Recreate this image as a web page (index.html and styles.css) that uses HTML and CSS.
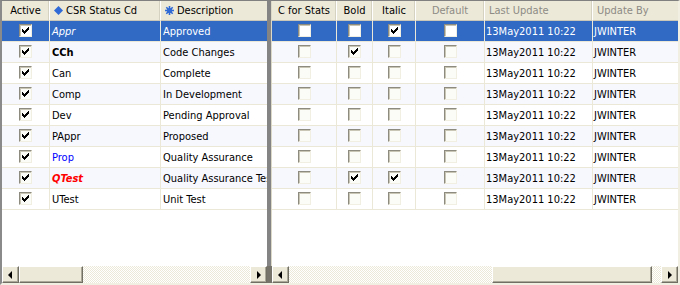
FILE: index.html
```html
<!DOCTYPE html>
<html lang="en">
<head>
    <meta charset="UTF-8">
    <title>CSR Status</title>
    <link rel="stylesheet" href="styles.css">
</head>
<body>

    <div class="grid-frame">

        <!-- fixed columns -->
        <div class="pane pane-left">
            <div class="table">
                <div class="row head">
                    <div class="hcell center">Active</div>
                    <div class="hcell">
                        <svg class="hicon" width="9" height="9" viewBox="0 0 9 9"><polygon points="4.5,0 9,4.5 4.5,9 0,4.5" fill="#2f6ad6"/></svg>
                        CSR Status Cd
                    </div>
                    <div class="hcell">
                        <svg class="hicon" width="9" height="9" viewBox="0 0 9 9">
                            <g stroke="#2f6ad6" stroke-width="1.6">
                                <line x1="4.5" y1="0" x2="4.5" y2="9"/>
                                <line x1="0" y1="4.5" x2="9" y2="4.5"/>
                                <line x1="1.3" y1="1.3" x2="7.7" y2="7.7"/>
                                <line x1="7.7" y1="1.3" x2="1.3" y2="7.7"/>
                            </g>
                            <circle cx="4.5" cy="4.5" r="2.6" fill="#2f6ad6"/>
                        </svg>
                        Description
                    </div>
                </div>

                <div class="row selected">
                    <div class="cell center"><span class="cb on"></span></div>
                    <div class="cell italic">Appr</div>
                    <div class="cell">Approved</div>
                </div>
                <div class="row alt">
                    <div class="cell center"><span class="cb on"></span></div>
                    <div class="cell bold">CCh</div>
                    <div class="cell">Code Changes</div>
                </div>
                <div class="row">
                    <div class="cell center"><span class="cb on"></span></div>
                    <div class="cell">Can</div>
                    <div class="cell">Complete</div>
                </div>
                <div class="row alt">
                    <div class="cell center"><span class="cb on"></span></div>
                    <div class="cell">Comp</div>
                    <div class="cell">In Development</div>
                </div>
                <div class="row">
                    <div class="cell center"><span class="cb on"></span></div>
                    <div class="cell">Dev</div>
                    <div class="cell">Pending Approval</div>
                </div>
                <div class="row alt">
                    <div class="cell center"><span class="cb on"></span></div>
                    <div class="cell">PAppr</div>
                    <div class="cell">Proposed</div>
                </div>
                <div class="row">
                    <div class="cell center"><span class="cb on"></span></div>
                    <div class="cell blue">Prop</div>
                    <div class="cell">Quality Assurance</div>
                </div>
                <div class="row alt">
                    <div class="cell center"><span class="cb on"></span></div>
                    <div class="cell bold italic red">QTest</div>
                    <div class="cell">Quality Assurance Test</div>
                </div>
                <div class="row">
                    <div class="cell center"><span class="cb on"></span></div>
                    <div class="cell">UTest</div>
                    <div class="cell">Unit Test</div>
                </div>
            </div>

            <div class="hscroll">
                <div class="sbtn"><span class="arrow-left"></span></div>
                <div class="track"><div class="thumb thumb-left"></div></div>
                <div class="sbtn"><span class="arrow-right"></span></div>
            </div>
        </div>

        <div class="splitter">
            <div class="split-top"></div>
            <div class="split-bottom"></div>
        </div>

        <!-- scrolling columns -->
        <div class="pane pane-right">
            <div class="table">
                <div class="row head">
                    <div class="hcell center">C for Stats</div>
                    <div class="hcell center">Bold</div>
                    <div class="hcell center">Italic</div>
                    <div class="hcell center muted">Default</div>
                    <div class="hcell muted">Last Update</div>
                    <div class="hcell muted">Update By</div>
                </div>

                <div class="row selected">
                    <div class="cell center"><span class="cb"></span></div>
                    <div class="cell center"><span class="cb"></span></div>
                    <div class="cell center"><span class="cb on"></span></div>
                    <div class="cell center"><span class="cb"></span></div>
                    <div class="cell tight">13May2011 10:22</div>
                    <div class="cell tight">JWINTER</div>
                </div>
                <div class="row alt">
                    <div class="cell center"><span class="cb"></span></div>
                    <div class="cell center"><span class="cb on"></span></div>
                    <div class="cell center"><span class="cb"></span></div>
                    <div class="cell center"><span class="cb"></span></div>
                    <div class="cell tight">13May2011 10:22</div>
                    <div class="cell tight">JWINTER</div>
                </div>
                <div class="row">
                    <div class="cell center"><span class="cb"></span></div>
                    <div class="cell center"><span class="cb"></span></div>
                    <div class="cell center"><span class="cb"></span></div>
                    <div class="cell center"><span class="cb"></span></div>
                    <div class="cell tight">13May2011 10:22</div>
                    <div class="cell tight">JWINTER</div>
                </div>
                <div class="row alt">
                    <div class="cell center"><span class="cb"></span></div>
                    <div class="cell center"><span class="cb"></span></div>
                    <div class="cell center"><span class="cb"></span></div>
                    <div class="cell center"><span class="cb"></span></div>
                    <div class="cell tight">13May2011 10:22</div>
                    <div class="cell tight">JWINTER</div>
                </div>
                <div class="row">
                    <div class="cell center"><span class="cb"></span></div>
                    <div class="cell center"><span class="cb"></span></div>
                    <div class="cell center"><span class="cb"></span></div>
                    <div class="cell center"><span class="cb"></span></div>
                    <div class="cell tight">13May2011 10:22</div>
                    <div class="cell tight">JWINTER</div>
                </div>
                <div class="row alt">
                    <div class="cell center"><span class="cb"></span></div>
                    <div class="cell center"><span class="cb"></span></div>
                    <div class="cell center"><span class="cb"></span></div>
                    <div class="cell center"><span class="cb"></span></div>
                    <div class="cell tight">13May2011 10:22</div>
                    <div class="cell tight">JWINTER</div>
                </div>
                <div class="row">
                    <div class="cell center"><span class="cb"></span></div>
                    <div class="cell center"><span class="cb"></span></div>
                    <div class="cell center"><span class="cb"></span></div>
                    <div class="cell center"><span class="cb"></span></div>
                    <div class="cell tight">13May2011 10:22</div>
                    <div class="cell tight">JWINTER</div>
                </div>
                <div class="row alt">
                    <div class="cell center"><span class="cb"></span></div>
                    <div class="cell center"><span class="cb on"></span></div>
                    <div class="cell center"><span class="cb on"></span></div>
                    <div class="cell center"><span class="cb"></span></div>
                    <div class="cell tight">13May2011 10:22</div>
                    <div class="cell tight">JWINTER</div>
                </div>
                <div class="row">
                    <div class="cell center"><span class="cb"></span></div>
                    <div class="cell center"><span class="cb"></span></div>
                    <div class="cell center"><span class="cb"></span></div>
                    <div class="cell center"><span class="cb"></span></div>
                    <div class="cell tight">13May2011 10:22</div>
                    <div class="cell tight">JWINTER</div>
                </div>
            </div>

            <div class="hscroll">
                <div class="sbtn"><span class="arrow-left"></span></div>
                <div class="track"><div class="thumb thumb-right"></div></div>
                <div class="sbtn"><span class="arrow-right"></span></div>
            </div>
        </div>

    </div>

</body>
</html>
```

FILE: styles.css
```css
body {
    margin: 0;
    padding: 0;
    background-color: #fff;
    font-family: "DejaVu Sans Condensed", "Liberation Sans", sans-serif;
    font-size: 11px;
    color: #000;
}
.grid-frame {
    display: flex;
    width: 680px;
    height: 285px;
    box-sizing: border-box;
    border-style: solid;
    border-width: 1px 2px 2px 2px;
    border-color: #808080 #f1efe2 #f1efe2 #8a8a8a;
    background-color: #fff;
}
.pane {
    display: flex;
    flex-direction: column;
    overflow: hidden;
}
.pane-left {
    width: 265px;
}
.pane-right {
    width: 406px;
}
.table {
    flex: 1;
    overflow: hidden;
}
.row {
    display: grid;
    height: 21px;
}
.pane-left .row {
    grid-template-columns: 48px 111px 150px;
}
.pane-right .row {
    grid-template-columns: 65px 36px 43px 69px 108px 130px;
}
.row.head {
    height: 20px;
}
.row.alt {
    background-color: #f7f7fe;
}
.row.selected {
    background-color: #316ac5;
    color: #fff;
}

.hcell {
    display: flex;
    align-items: center;
    gap: 3px;
    padding: 0 4px;
    box-sizing: border-box;
    background-color: #ece9d8;
    border-right: 1px solid #fff;
    border-bottom: 1px solid #cbc7b8;
    box-shadow: inset -1px 0 0 #d6d2c2;
    white-space: nowrap;
    overflow: hidden;
}
.hcell.center {
    justify-content: center;
}
.hcell.muted {
    color: #8d8b85;
}
.hicon {
    flex: none;
}

.cell {
    display: flex;
    align-items: center;
    padding: 0 2px;
    box-sizing: border-box;
    border-right: 1px solid #ebe8d8;
    border-bottom: 1px solid #ebe8d8;
    white-space: nowrap;
    overflow: hidden;
}
.cell.center {
    justify-content: center;
    padding: 0;
}
.cell.tight {
    padding: 0 1px;
}
.bold {
    font-weight: bold;
}
.italic {
    font-style: italic;
}
.blue {
    color: #0000ff;
}
.red {
    color: #ff0000;
}

/* checkbox */
.cb {
    display: block;
    width: 13px;
    height: 13px;
    box-sizing: border-box;
    border: 1px solid;
    border-color: #8d8b80 #f1efe2 #f1efe2 #8d8b80;
    box-shadow: inset 1px 1px 0 #c9c6b6;
    background-color: #fbfbf8;
    margin-top: -1px;
}
.row.selected .cb {
    background-color: #fff;
}
.cb.on {
    background-image: url("data:image/svg+xml,%3Csvg xmlns='http://www.w3.org/2000/svg' width='11' height='11' shape-rendering='crispEdges'%3E%3Cpath d='M2 4h1v3h-1zM3 5h1v3h-1zM4 6h1v3h-1zM5 5h1v3h-1zM6 4h1v3h-1zM7 3h1v3h-1zM8 2h1v3h-1z' fill='%23000'/%3E%3C/svg%3E");
    background-repeat: no-repeat;
}

/* splitter */
.splitter {
    display: flex;
    flex-direction: column;
    width: 5px;
}
.split-top {
    flex: 1;
    background-color: #848484;
    border-right: 1px solid #dcd9c8;
}
.split-bottom {
    height: 17px;
    background-color: #76746a;
}

/* horizontal scrollbar */
.hscroll {
    display: flex;
    height: 17px;
    flex: none;
}
.sbtn,
.thumb {
    box-sizing: border-box;
    background-color: #ece9d8;
    border: 1px solid;
    border-color: #fff #716f64 #716f64 #fff;
    box-shadow: inset -1px -1px 0 #aca899;
}
.sbtn {
    display: flex;
    align-items: center;
    justify-content: center;
    width: 17px;
    height: 17px;
}
.track {
    flex: 1;
    display: flex;
    background-color: #f4f3ee;
    background-image: repeating-conic-gradient(#ece9d8 0 25%, #fff 0 50%);
    background-size: 2px 2px;
}
.thumb {
    height: 17px;
}
.thumb-left {
    width: 64px;
}
.thumb-right {
    width: 160px;
    margin-left: 203px;
}
.arrow-left,
.arrow-right {
    width: 0;
    height: 0;
    border-top: 4px solid transparent;
    border-bottom: 4px solid transparent;
}
.arrow-left {
    border-right: 4px solid #000;
    margin-left: -1px;
}
.arrow-right {
    border-left: 4px solid #000;
    margin-left: 1px;
}
```
